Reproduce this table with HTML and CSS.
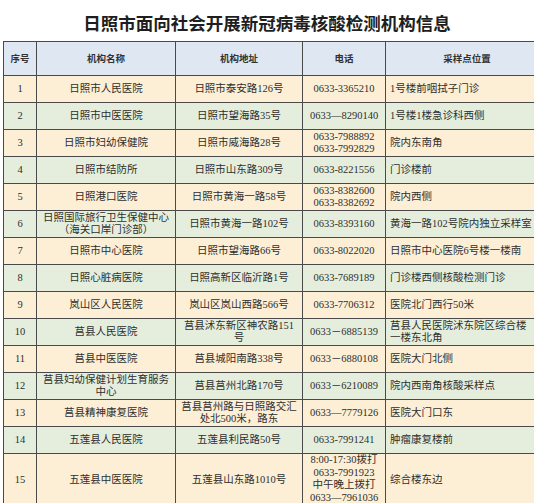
FILE: index.html
```html
<!DOCTYPE html>
<html lang="zh">
<head>
<meta charset="utf-8">
<link rel="stylesheet" href="styles.css">
</head>
<body>
<div class="page">
  <h1 class="title">日照市面向社会开展新冠病毒核酸检测机构信息</h1>
  <table class="grid">
    <colgroup>
      <col class="c1"><col class="c2"><col class="c3"><col class="c4"><col class="c5">
    </colgroup>
    <thead>
      <tr class="head">
        <th>序号</th><th>机构名称</th><th>机构地址</th><th>电话</th><th>采样点位置</th>
      </tr>
    </thead>
    <tbody>
      <tr class="odd"><td>1</td><td>日照市人民医院</td><td>日照市泰安路126号</td><td>0633-3365210</td><td class="loc">1号楼前咽拭子门诊</td></tr>
      <tr class="even"><td>2</td><td>日照市中医医院</td><td>日照市望海路35号</td><td>0633—8290140</td><td class="loc">1号楼1楼急诊科西侧</td></tr>
      <tr class="odd"><td>3</td><td>日照市妇幼保健院</td><td>日照市威海路28号</td><td class="two">0633-7988892<br>0633-7992829</td><td class="loc">院内东南角</td></tr>
      <tr class="even"><td>4</td><td>日照市结防所</td><td>日照市山东路309号</td><td>0633-8221556</td><td class="loc">门诊楼前</td></tr>
      <tr class="odd"><td>5</td><td>日照港口医院</td><td>日照市黄海一路58号</td><td class="two">0633-8382600<br>0633-8382692</td><td class="loc">院内西侧</td></tr>
      <tr class="even"><td>6</td><td class="two">日照国际旅行卫生保健中心<br>（海关口岸门诊部）</td><td>日照市黄海一路102号</td><td>0633-8393160</td><td class="loc">黄海一路102号院内独立采样室</td></tr>
      <tr class="odd"><td>7</td><td>日照市中心医院</td><td>日照市望海路66号</td><td>0633-8022020</td><td class="loc">日照市中心医院6号楼一楼南</td></tr>
      <tr class="even"><td>8</td><td>日照心脏病医院</td><td>日照高新区临沂路1号</td><td>0633-7689189</td><td class="loc">门诊楼西侧核酸检测门诊</td></tr>
      <tr class="odd"><td>9</td><td>岚山区人民医院</td><td>岚山区岚山西路566号</td><td>0633-7706312</td><td class="loc">医院北门西行50米</td></tr>
      <tr class="even"><td>10</td><td>莒县人民医院</td><td class="two">莒县沭东新区神农路151<br>号</td><td>0633－6885139</td><td class="loc two">莒县人民医院沭东院区综合楼<br>一楼东北角</td></tr>
      <tr class="odd"><td>11</td><td>莒县中医医院</td><td>莒县城阳南路338号</td><td>0633－6880108</td><td class="loc">医院大门北侧</td></tr>
      <tr class="even"><td>12</td><td class="two">莒县妇幼保健计划生育服务<br>中心</td><td>莒县莒州北路170号</td><td>0633－6210089</td><td class="loc">院内西南角核酸采样点</td></tr>
      <tr class="odd"><td>13</td><td>莒县精神康复医院</td><td class="two">莒县莒州路与日照路交汇<br>处北500米，路东</td><td>0633—7779126</td><td class="loc">医院大门口东</td></tr>
      <tr class="even"><td>14</td><td>五莲县人民医院</td><td>五莲县利民路50号</td><td>0633-7991241</td><td class="loc">肿瘤康复楼前</td></tr>
      <tr class="odd last"><td>15</td><td>五莲县中医医院</td><td>五莲县山东路1010号</td><td class="four">8:00-17:30拨打<br>0633-7991923<br>中午晚上拨打<br>0633—7961036</td><td class="loc">综合楼东边</td></tr>
    </tbody>
  </table>
</div>
</body>
</html>
```

FILE: styles.css
```css
html, body {
  margin: 0;
  padding: 0;
  background: #ffffff;
}
.page {
  width: 534px;
  height: 503px;
  overflow: hidden;
}
.title {
  margin: 0;
  height: 41px;
  line-height: 45px;
  text-align: center;
  font-family: "Noto Sans CJK SC", sans-serif;
  font-weight: 700;
  font-size: 17.5px;
  color: #1e1e1e;
}
.grid {
  margin-left: 3px;
  border-collapse: collapse;
  table-layout: fixed;
  width: 545px;
  font-family: "Liberation Serif", "Noto Sans CJK SC", serif;
  font-size: 10.5px;
  color: #2e2e2e;
}
.c1 { width: 33px; }
.c2 { width: 139px; }
.c3 { width: 127px; }
.c4 { width: 83px; }
.c5 { width: 163px; }
.grid th, .grid td {
  border: 1px solid #4a4a4a;
  padding: 0 2px;
  text-align: center;
  vertical-align: middle;
  white-space: nowrap;
  overflow: hidden;
  line-height: 12.5px;
}
.grid th {
  font-family: "Noto Sans CJK SC", sans-serif;
  font-weight: 700;
  font-size: 9.5px;
  color: #333;
}
.head {
  height: 34px;
  background: #dfe7f3;
}
.grid tbody tr {
  height: 27px;
}
.odd { background: #fcefd5; }
.even { background: #e5eedd; }
.grid td.loc {
  text-align: left;
  padding-left: 4px;
}
.grid td.four {
  line-height: 12.5px;
  vertical-align: top;
  padding-top: 0;
}
.grid tr.last {
  height: 53px;
}
```
